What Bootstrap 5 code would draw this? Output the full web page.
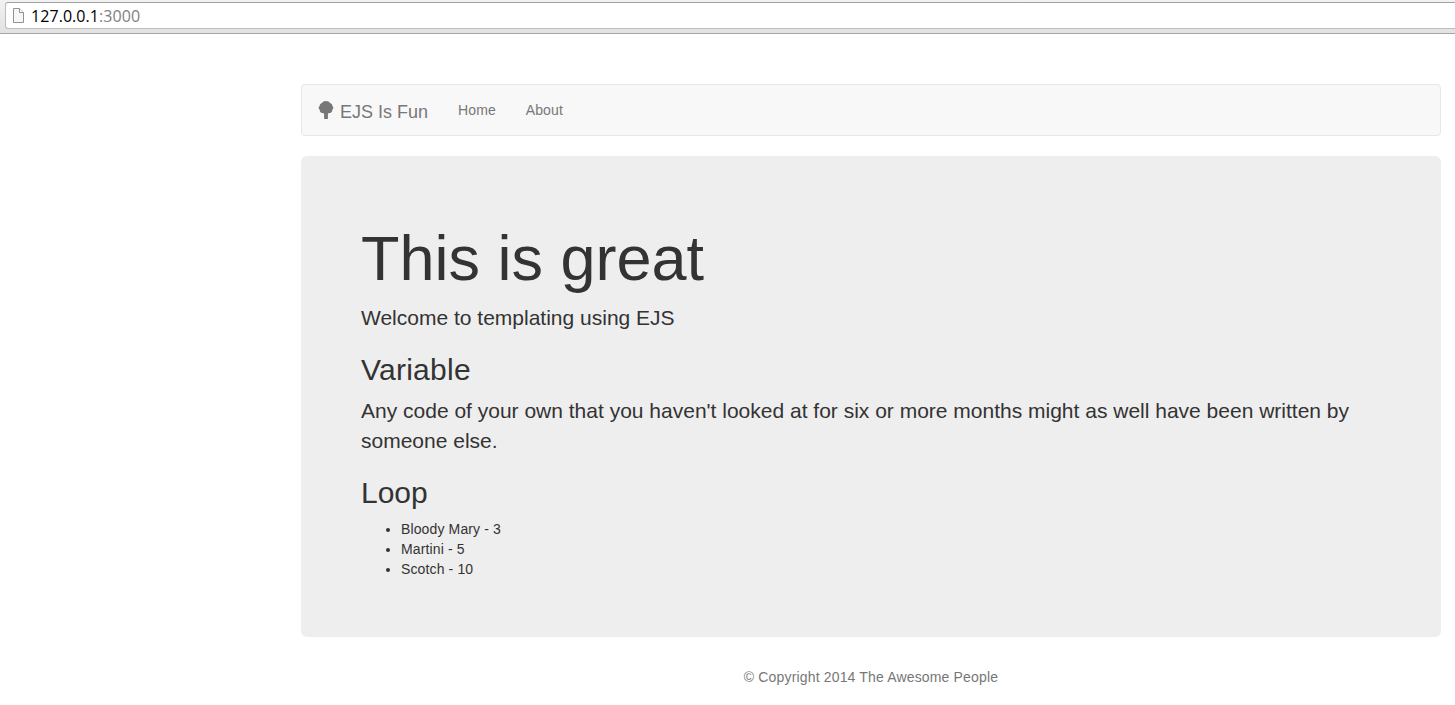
<!DOCTYPE html>
<html lang="en">
<head>
<meta charset="utf-8">
<meta name="viewport" content="width=device-width, initial-scale=1">
<title>EJS Is Fun</title>
<link href="https://cdn.jsdelivr.net/npm/bootstrap@5.3.0/dist/css/bootstrap.min.css" rel="stylesheet">
<style>
body{font:14px/20px "Liberation Sans",Arial,sans-serif;color:#333;height:705px;overflow:hidden}
.browser-bar{height:34px;padding:2px 0 0 5px;background:linear-gradient(#f2f2f2,#e2e2e2);border-bottom:1px solid #a6a6a6}
.address{height:27px;background:#fff;border:1px solid #bcbcbc;border-top-color:#a2a2a2;border-right:0;border-radius:3px 0 0 3px;padding-left:7px;font:16px/26px "Open Sans",sans-serif;letter-spacing:.06px;color:#808080}
.address b{font-weight:400;color:#000}
.address svg{margin-right:6px}
.page{width:1140px;margin-left:301px;padding-top:50px}
.site-nav{height:52px;background:#f8f8f8;border:1px solid #e7e7e7;border-radius:4px;margin-bottom:20px;padding:0 0 0 15px}
.site-nav .navbar-brand{font-size:18px;line-height:20px;color:#777;padding:2px 0 0;margin:0 15px 0 0}
.site-nav .navbar-brand svg{margin-right:5px}
.site-nav .navbar-brand span{padding-top:1px}
.site-nav .navbar-nav .nav-link{color:#777;padding:15px;line-height:20px;letter-spacing:.1px}
.hero{background:#eee;border-radius:6px;padding:48px 60px;height:481px;margin-bottom:30px}
.hero h1{font-size:63px;line-height:69px;font-weight:400;margin:20px 0 10px}
.hero p{font-size:21px;line-height:30px;margin-bottom:15px}
.hero h2{font-size:30px;line-height:33px;font-weight:400;margin:20px 0 10px}
.hero .wide-title{letter-spacing:.25px}
.hero ul{padding-left:40px;margin:0;letter-spacing:.13px}
.copy{color:#777;letter-spacing:.16px}
</style>
<script src="https://cdn.jsdelivr.net/npm/bootstrap@5.3.0/dist/js/bootstrap.bundle.min.js"></script>
</head>
<body>
<div class="browser-bar">
<div class="address d-flex align-items-center"><svg width="12" height="16" viewBox="0 0 12 16"><path d="M.5.5h6l4 4v10H.5z" fill="#f7f7f7" stroke="#929292"/><path d="M6.500.5v4h4" fill="#fff" stroke="#929292"/></svg><span><b>127.0.0.1</b>:3000</span></div>
</div>
<div class="page">
<nav class="site-nav navbar navbar-expand justify-content-start">
<a class="navbar-brand d-flex" href="#"><svg width="18" height="18" viewBox="0 0 18 18" fill="#777"><path d="M9 0c2 0 3.500.8 4 2 1.600.4 2.400 1.400 2.200 2.700 1.500 1.200 1.500 3 .1 4 .1 2.200-1.600 3.600-3.500 3.400-.3.400-.6.700-.9.800V18H7.100v-5.100c-.3-.1-.6-.4-.9-.8-1.900.2-3.600-1.200-3.500-3.400-1.400-1-1.400-2.800.1-4C2.600 3.400 3.400 2.400 5 2c.5-1.200 2-2 4-2z"/></svg><span>EJS Is Fun</span></a>
<div class="navbar-nav"><a class="nav-link" href="#">Home</a><a class="nav-link" href="#">About</a></div>
</nav>
<main class="hero">
<h1>This is great</h1>
<p>Welcome to templating using EJS</p>
<h2 class="wide-title">Variable</h2>
<p>Any code of your own that you haven't looked at for six or more months might as well have been written by someone else.</p>
<h2>Loop</h2>
<ul><li>Bloody Mary - 3</li><li>Martini - 5</li><li>Scotch - 10</li></ul>
</main>
<footer class="copy text-center">© Copyright 2014 The Awesome People</footer>
</div>
</body>
</html>
